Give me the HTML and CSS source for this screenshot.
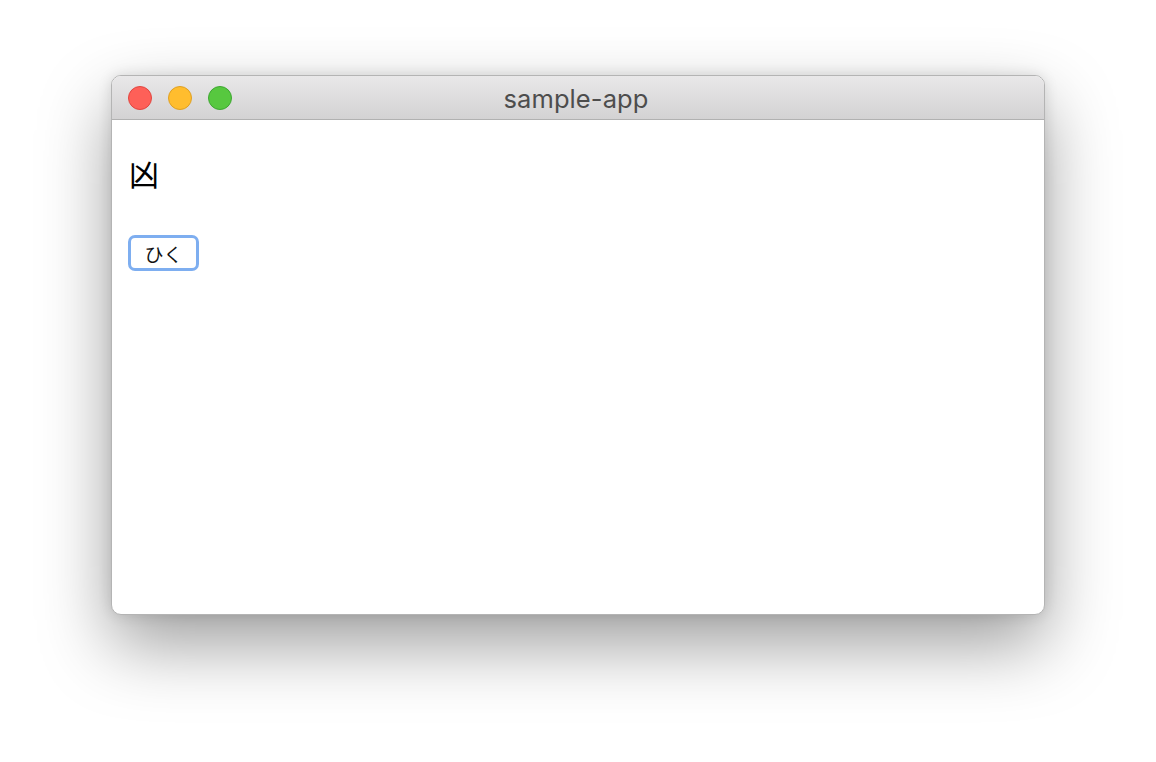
FILE: index.html
```html
<!DOCTYPE html>
<html lang="ja">
<head>
<meta charset="utf-8">
<title>sample-app</title>
<link rel="stylesheet" href="styles.css">
</head>
<body>
<div class="stage">
  <div class="window">
    <div class="titlebar">
      <div class="lights">
        <span class="light close"></span>
        <span class="light min"></span>
        <span class="light max"></span>
      </div>
      <div class="title">sample-app</div>
    </div>
    <div class="content">
      <p class="glyph">凶</p>
      <button class="btn">ひく</button>
    </div>
  </div>
</div>
</body>
</html>
```
FILE: styles.css
```css
html, body {
  margin: 0;
  padding: 0;
  background: #ffffff;
}
.stage {
  width: 1156px;
  height: 762px;
  padding: 75px 0 0 111px;
  box-sizing: border-box;
}
.window {
  width: 934px;
  height: 540px;
  border-radius: 10px;
  border: 1px solid #b4b4b4;
  background: #ffffff;
  overflow: hidden;
  box-sizing: border-box;
  box-shadow: 0 30px 70px rgba(0,0,0,0.38), 0 0 14px rgba(0,0,0,0.12);
  display: flex;
  flex-direction: column;
}
.titlebar {
  height: 43px;
  flex: none;
  background: linear-gradient(#e9e8e9, #d3d2d3);
  border-bottom: 1px solid #b1b1b1;
  display: flex;
  align-items: center;
  position: relative;
}
.lights {
  display: flex;
  gap: 16px;
  padding-left: 16px;
}
.light {
  width: 24px;
  height: 24px;
  border-radius: 50%;
  box-sizing: border-box;
}
.close { background: #fe6058; border: 1px solid #e14640; }
.min { background: #ffbd2e; border: 1px solid #dfa023; }
.max { background: #57c83f; border: 1px solid #3ea732; }
.title {
  position: absolute;
  left: 0;
  right: 4px;
  top: 2px;
  bottom: 0;
  display: flex;
  align-items: center;
  justify-content: center;
  font-family: "Inter", "Liberation Sans", sans-serif;
  font-size: 25.5px;
  color: #4d4d4d;
  letter-spacing: 0.1px;
}
.content {
  padding: 0 16px;
  flex: 1;
}
.glyph {
  margin: 33px 0 0 1px;
  font-family: "Noto Sans CJK JP", serif;
  font-size: 30px;
  line-height: 40px;
  color: #000;
}
.btn {
  margin-top: 42px;
  width: 71px;
  height: 36px;
  box-sizing: border-box;
  border: 3px solid #7eaef0;
  border-radius: 7px;
  background: #fff;
  font-family: "Noto Sans CJK JP", sans-serif;
  font-size: 19px;
  color: #111;
  padding: 0;
  line-height: 1;
  display: flex;
  align-items: center;
  justify-content: center;
}
```
